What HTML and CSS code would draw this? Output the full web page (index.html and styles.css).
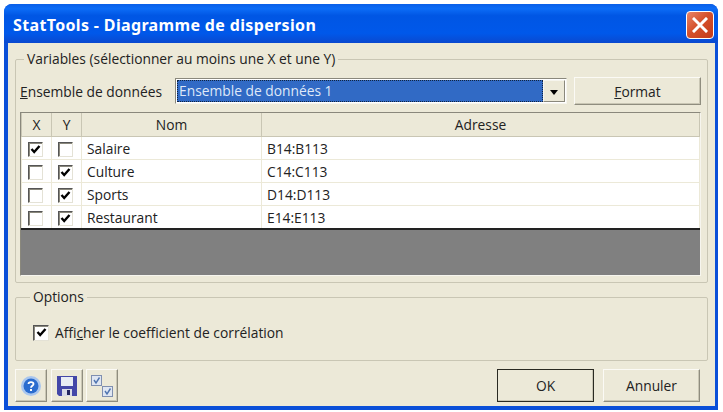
FILE: index.html
```html
<!DOCTYPE html>
<html lang="fr">
<head>
  <meta charset="UTF-8" />
  <title>StatTools - Diagramme de dispersion</title>
  <link rel="stylesheet" href="styles.css">
</head>
<body>
  <div class="window">
    <header class="titlebar">
      <h1>StatTools - Diagramme de dispersion</h1>
      <button class="close-btn">
        <svg width="16" height="16" viewBox="0 0 16 16"><path d="M2 2 L14 14 M14 2 L2 14" stroke="#fff" stroke-width="3" stroke-linecap="square"/></svg>
      </button>
    </header>

    <main class="content">
      <fieldset class="group group-vars">
        <legend>Variables (sélectionner au moins une X et une Y)</legend>
        <div class="dataset-row">
          <label class="dataset-label"><u>E</u>nsemble de données</label>
          <div class="combo">
            <span class="combo-value">Ensemble de données 1</span>
            <span class="combo-arrow"></span>
          </div>
          <button class="btn format-btn"><u>F</u>ormat</button>
        </div>

        <div class="grid-box">
          <table class="grid">
            <thead>
              <tr>
                <th class="col-x">X</th>
                <th class="col-y">Y</th>
                <th class="col-nom">Nom</th>
                <th>Adresse</th>
              </tr>
            </thead>
            <tbody>
              <tr>
                <td><span class="check on"></span></td>
                <td><span class="check"></span></td>
                <td>Salaire</td>
                <td>B14:B113</td>
              </tr>
              <tr>
                <td><span class="check"></span></td>
                <td><span class="check on"></span></td>
                <td>Culture</td>
                <td>C14:C113</td>
              </tr>
              <tr>
                <td><span class="check"></span></td>
                <td><span class="check on"></span></td>
                <td>Sports</td>
                <td>D14:D113</td>
              </tr>
              <tr>
                <td><span class="check"></span></td>
                <td><span class="check on"></span></td>
                <td>Restaurant</td>
                <td>E14:E113</td>
              </tr>
            </tbody>
          </table>
          <div class="grid-empty"></div>
        </div>
      </fieldset>

      <fieldset class="group group-options">
        <legend>Options</legend>
        <label class="option">
          <span class="check on"></span>
          <span>Affi<u>c</u>her le coefficient de corrélation</span>
        </label>
      </fieldset>

      <footer class="actions">
        <div class="tools">
          <button class="btn tool-btn">
            <svg width="22" height="22" viewBox="0 0 22 22">
              <circle cx="11" cy="11" r="10" fill="#a9c6ee"/>
              <circle cx="11" cy="11" r="7.5" fill="#2a6ccf"/>
              <path d="M8.5 9 C8.5 6.5 13.5 6.5 13.5 9 C13.5 10.8 11 10.8 11 12.8" fill="none" stroke="#fff" stroke-width="1.8"/>
              <rect x="10" y="14" width="2" height="2" fill="#fff"/>
            </svg>
          </button>
          <button class="btn tool-btn">
            <svg width="20" height="20" viewBox="0 0 20 20">
              <path d="M0 0 H20 V20 H2 L0 18 Z" fill="#4347a8"/>
              <rect x="4" y="1" width="12" height="9" fill="#e8ecf4"/>
              <rect x="5" y="13" width="10" height="7" fill="#d9dbe6"/>
              <rect x="10" y="14" width="3" height="5" fill="#23265f"/>
            </svg>
          </button>
          <button class="btn tool-btn">
            <svg width="24" height="24" viewBox="0 0 24 24">
              <rect x="1.5" y="1.5" width="10" height="10" fill="#dfe6f2" stroke="#7f8fb0"/>
              <path d="M4 6 L6 9 L9.5 3.5" fill="none" stroke="#4f74b0" stroke-width="1.4"/>
              <rect x="12.5" y="12.5" width="10" height="10" fill="#dfe6f2" stroke="#7f8fb0"/>
              <path d="M15 17 L17 20 L20.5 14.5" fill="none" stroke="#4f74b0" stroke-width="1.4"/>
            </svg>
          </button>
        </div>
        <div class="main-btns">
          <button class="btn main-btn default">OK</button>
          <button class="btn main-btn">Annuler</button>
        </div>
      </footer>
    </main>
  </div>
</body>
</html>
```

FILE: styles.css
```css
body {
  margin: 0;
  background: #fff;
  font-family: "Open Sans", "Noto Sans", sans-serif;
  font-size: 13.8px;
  color: #222;
}

.window {
  width: 714px;
  height: 406px;
  margin: 4px 0 0 4px;
  display: flex;
  flex-direction: column;
  background: #0a4fd8;
  border-radius: 8px 8px 0 0;
  overflow: hidden;
}

.titlebar {
  height: 39px;
  flex: none;
  box-sizing: border-box;
  display: flex;
  align-items: center;
  justify-content: space-between;
  padding: 2px 4px 0 9px;
  background: linear-gradient(#0a5fe8 0%, #0c6cf6 12%, #0056e4 30%, #0058ea 75%, #0a49cf 100%);
}

.titlebar h1 {
  margin: 0;
  font-family: "Noto Sans", sans-serif;
  font-size: 16px;
  font-weight: bold;
  letter-spacing: 0.35px;
  color: #fff;
}

.close-btn {
  width: 28px;
  height: 28px;
  padding: 0;
  display: flex;
  align-items: center;
  justify-content: center;
  background: linear-gradient(135deg, #e8866a, #d5512c 45%, #c43c1a);
  border: 1px solid #fff;
  border-radius: 4px;
}

.content {
  flex: 1;
  margin: 0 3px 4px 4px;
  padding: 7px 7px 0 7px;
  background: #ece9d8;
  display: flex;
  flex-direction: column;
}

.group {
  margin: 0;
  padding: 0;
  border: 1px solid #c9c6b4;
  border-radius: 2px;
  min-width: 0;
}

.group legend {
  padding: 0 3px;
  margin-left: 4px;
  line-height: 18px;
}

.group-vars {
  height: 231px;
  padding: 0 5px 0 4px;
}

.group-options {
  height: 71px;
  margin-top: 5px;
}

.group-options legend {
  margin-left: 14px;
}

.dataset-row {
  display: flex;
  align-items: center;
  height: 28px;
  margin-top: 9px;
}

.dataset-label {
  width: 155px;
  flex: none;
}

.combo {
  width: 392px;
  height: 26px;
  flex: none;
  box-sizing: border-box;
  display: flex;
  background: #fff;
  border: 1px solid;
  border-color: #8a887c #f6f5ee #f6f5ee #8a887c;
  padding: 1px;
}

.combo-value {
  flex: 1;
  padding-left: 1px;
  line-height: 20px;
  color: #dfe8f8;
  background: #316ac5;
  border: 1px dotted #10233f;
}

.combo-arrow {
  width: 22px;
  flex: none;
  background: #ece9d8;
  border: 1px solid;
  border-color: #f6f5ee #8a887c #8a887c #f6f5ee;
  box-sizing: border-box;
  position: relative;
}

.combo-arrow::after {
  content: "";
  position: absolute;
  left: 6px;
  top: 9px;
  border: 4px solid transparent;
  border-top: 5px solid #000;
  border-bottom: 0;
}

.btn {
  font-family: inherit;
  font-size: 13.8px;
  color: #222;
  background: #ece9d8;
  border: 1px solid;
  border-color: #fbfaf5 #8f8d7f #8f8d7f #fbfaf5;
  box-shadow: inset -1px -1px 0 #c9c6b4;
  padding: 0;
}

.format-btn {
  width: 127px;
  height: 28px;
  margin-left: 7px;
}

.grid-box {
  width: 679px;
  margin-top: 7px;
  border: 1px solid;
  border-color: #8a887c #f6f5ee #f6f5ee #8a887c;
  background: #808080;
}

.grid {
  width: 100%;
  table-layout: fixed;
  border-collapse: collapse;
  background: #fff;
  border-bottom: 2px solid #222;
}

.grid th {
  height: 23px;
  padding: 0;
  font-weight: normal;
  background: #ece9d8;
  border: 1px solid #c9c6b4;
  border-top: 0;
}

.grid td {
  height: 22px;
  padding: 0 0 0 5px;
  border: 1px solid #ece9d8;
  border-top: 0;
}

.grid td:nth-child(-n+2) {
  padding-left: 6px;
}

.col-x, .col-y {
  width: 29px;
}

.col-nom {
  width: 179px;
}

.grid-empty {
  height: 45px;
}

.check {
  width: 15px;
  height: 15px;
  box-sizing: border-box;
  display: inline-block;
  vertical-align: middle;
  background: #fff center no-repeat;
  border: 1px solid;
  border-color: #555 #e4e2d6 #e4e2d6 #555;
  box-shadow: inset 1px 1px 0 #8a887c;
}

.check.on {
  background-image: url("data:image/svg+xml,%3Csvg xmlns='http://www.w3.org/2000/svg' width='11' height='11'%3E%3Cpath d='M1.5 5 L4.2 8 L9.5 2' fill='none' stroke='%23000' stroke-width='2.4'/%3E%3C/svg%3E");
}

.option {
  display: flex;
  align-items: center;
  gap: 6px;
  margin: 17px 0 0 17px;
}

.option .check {
  width: 16px;
  height: 16px;
}

.actions {
  display: flex;
  justify-content: space-between;
  margin-top: 8px;
}

.tools {
  display: flex;
  gap: 3.5px;
}

.tool-btn {
  width: 32px;
  height: 33px;
  display: flex;
  align-items: center;
  justify-content: center;
}

.main-btns {
  display: flex;
  gap: 9px;
  margin-right: 8px;
}

.main-btn {
  width: 97px;
  height: 33px;
}

.main-btn.default {
  border-color: #2a2a22;
}
```
